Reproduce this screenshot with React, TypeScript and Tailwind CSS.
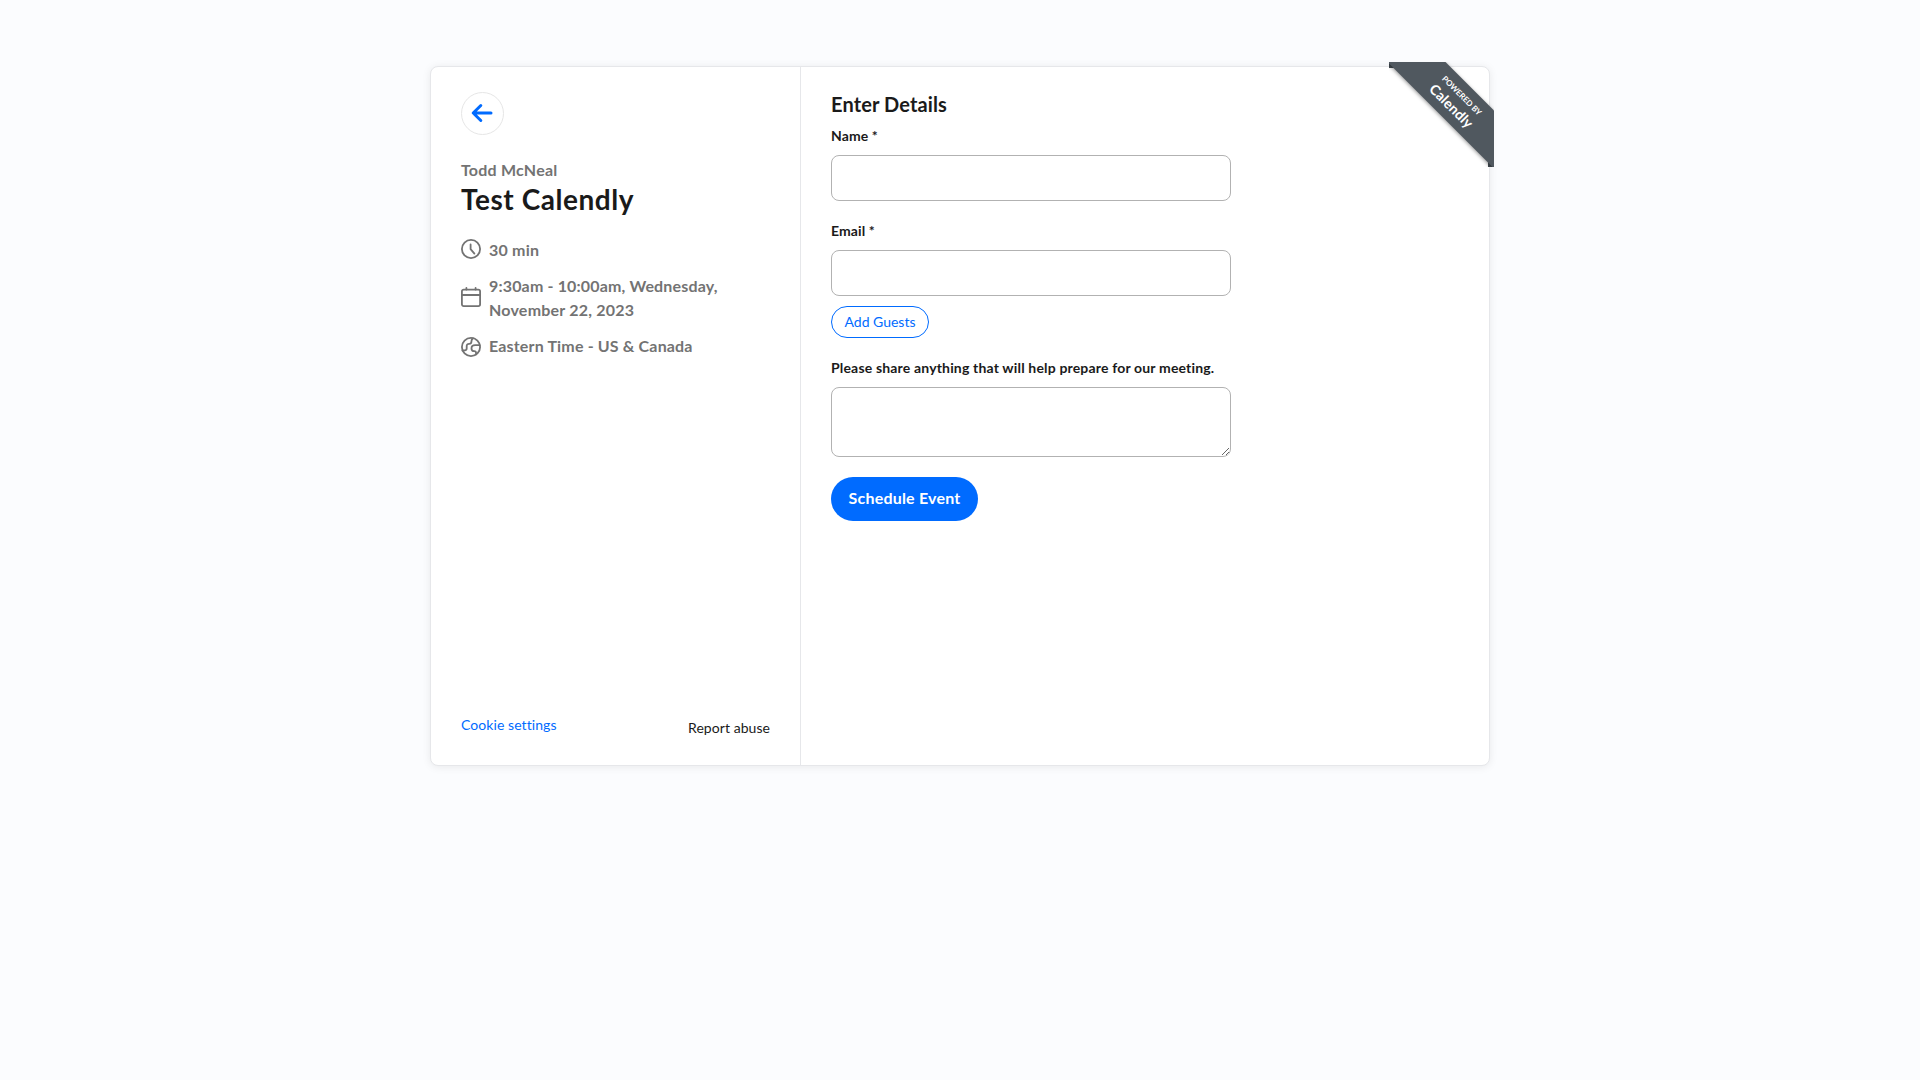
import React from "react";

const iconProps = {
  fill: "none",
  stroke: "currentColor",
  strokeLinecap: "round" as const,
  strokeLinejoin: "round" as const,
};

function ArrowLeft() {
  return (
    <svg width="22" height="20" viewBox="0 0 22 20" className="mr-px mb-px text-[#006bff]" {...iconProps} strokeWidth="3">
      <path d="M20 10H2.5M9.8 2.5L2.2 10L9.8 17.5" />
    </svg>
  );
}

function ClockIcon() {
  return (
    <svg width="20" height="20" viewBox="0 0 20 20" className="shrink-0" {...iconProps} strokeWidth="1.8">
      <circle cx="10" cy="10" r="9.1" />
      <path d="M9.6 5.4V10.2L13.4 14.6" />
    </svg>
  );
}

function CalendarIcon() {
  return (
    <svg width="20" height="20" viewBox="0 0 20 20" className="shrink-0" {...iconProps} strokeWidth="1.8">
      <rect x="0.9" y="2.6" width="18.2" height="16.5" rx="1.8" />
      <path d="M1 8H19M5.4 0.9V2.6M14.6 0.9V2.6" />
    </svg>
  );
}

function GlobeIcon() {
  return (
    <svg width="20" height="20" viewBox="0 0 20 20" className="shrink-0" {...iconProps} strokeWidth="1.8">
      <circle cx="10" cy="10" r="9.1" />
      <path d="M1.5 13.4H3.8C5.2 13.4 5.7 12.4 5.7 11.2V9.1C5.7 7.6 6.7 6.9 8 6.9C9.6 6.9 10.4 6.2 10.4 4.8C10.4 3.6 10.7 2.2 11.9 1.2" />
      <path d="M18.8 8.2H14.2C12.1 8.2 10.5 9.5 10.5 11.4C10.5 13.1 11.8 14.2 13.3 14.2C14.7 14.2 15.1 14.9 15.1 16.2V17.4" />
    </svg>
  );
}

function Ribbon() {
  return (
    <div className="absolute -top-[5px] -right-[5px] h-[105px] w-[105px] overflow-hidden">
      <div className="absolute top-0 left-0 h-[6px] w-[6px] bg-[#434b52]" />
      <div className="absolute right-0 bottom-0 h-[6px] w-[6px] bg-[#434b52]" />
      <div className="absolute top-[19.5px] -left-[15px] flex h-[41px] w-[166px] rotate-45 flex-col items-center justify-center bg-[#50585f] pr-[3px] text-white shadow-[0_1px_4px_rgba(0,0,0,0.4)]">
        <span className="text-[8px] leading-[12px] font-bold tracking-[-0.05px]">POWERED BY</span>
        <span className="text-[14px] leading-[17px] font-bold tracking-[0.15px]">Calendly</span>
      </div>
    </div>
  );
}

export default function App() {
  return (
    <div className="min-h-screen bg-[#fbfcfe] pt-[66px] font-['Lato','Open_Sans',sans-serif] text-[#1a1a1a]">
      <main className="relative mx-auto flex h-[700px] w-[1060px] rounded-lg border border-[#e6e7ea] bg-white shadow-[0_1px_8px_rgba(0,0,0,0.08)]">
        <section className="flex w-[370px] shrink-0 flex-col border-r border-[#e6e7ea] px-[30px] pt-[25px] pb-[27px]">
          <button aria-label="Back" className="flex h-[43px] w-[43px] items-center justify-center rounded-full border border-[#e6e6e6]">
            <ArrowLeft />
          </button>
          <div className="mt-[23px] text-base leading-6 font-bold tracking-[0.2px] text-[#737373]">Todd McNeal</div>
          <h1 className="pt-px text-[28px] leading-8 font-bold tracking-[0.55px]">Test Calendly</h1>
          <div className="mt-[23px] flex flex-col gap-3 text-base leading-6 font-bold text-[#737373]">
            <div className="flex gap-2">
              <div className="pt-px"><ClockIcon /></div>
              <span className="tracking-[0.2px]">30 min</span>
            </div>
            <div className="flex items-center gap-2">
              <div className="pb-[2px]"><CalendarIcon /></div>
              <span className="whitespace-nowrap">
                <span className="tracking-[0.16px]">9:30am - 10:00am, Wednesday,</span>
                <br />
                <span className="tracking-[0.22px]">November 22, 2023</span>
              </span>
            </div>
            <div className="flex gap-2">
              <div className="pt-[3px]"><GlobeIcon /></div>
              <span className="tracking-[0.16px]">Eastern Time - US &amp; Canada</span>
            </div>
          </div>
          <footer className="mt-auto flex justify-between text-sm leading-5">
            <a className="tracking-[0.07px] text-[#006bff]">Cookie settings</a>
            <a className="pt-[3px] tracking-[0.06px]">Report abuse</a>
          </footer>
        </section>

        <section className="flex flex-col items-start pt-[25px] pl-[30px]">
          <h2 className="text-xl leading-6 font-bold tracking-[0.12px]">Enter Details</h2>
          <label className="mt-[10px] text-sm leading-5 font-bold tracking-[0.1px]">Name *</label>
          <input className="mt-[9px] h-[46px] w-[400px] rounded-lg border border-[#b2b2b2] px-3" />
          <label className="mt-5 text-sm leading-5 font-bold tracking-[0.1px]">Email *</label>
          <input className="mt-[9px] h-[46px] w-[400px] rounded-lg border border-[#b2b2b2] px-3" />
          <button className="mt-[10px] h-8 w-[98px] rounded-full border border-[#006bff] text-sm leading-5 whitespace-nowrap text-[#006bff]">
            Add Guests
          </button>
          <label className="mt-5 text-sm leading-5 font-bold tracking-[0.17px] whitespace-nowrap">
            Please share anything that will help prepare for our meeting.
          </label>
          <textarea className="mt-[9px] h-[70px] w-[400px] resize rounded-lg border border-[#b2b2b2] px-3" />
          <button className="mt-5 h-11 w-[147px] rounded-full bg-[#006bff] pb-[2px] text-base leading-6 font-bold tracking-[0.2px] whitespace-nowrap text-white">
            Schedule Event
          </button>
        </section>

        <Ribbon />
      </main>
    </div>
  );
}
